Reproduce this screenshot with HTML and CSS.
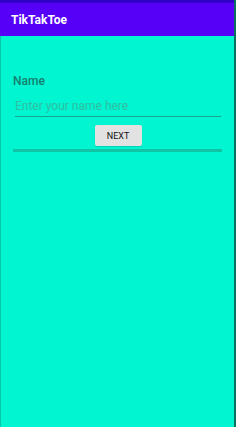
FILE: index.html
```html
<!DOCTYPE html>
<html lang="en">

<head>
    <meta charset="UTF-8">
    <meta name="viewport" content="width=device-width, initial-scale=1.0">
    <title>TikTakToe</title>
    <link rel="stylesheet" href="styles.css">
</head>

<body>
    <div class="app">
        <div class="statusbar"></div>
        <div class="toolbar">TikTakToe</div>
        <div class="content">
            <div class="form">
                <div class="label">Name</div>
                <input class="nameinput" type="text" placeholder="Enter your name here">
                <div class="btnrow">
                    <button class="nextbtn">NEXT</button>
                </div>
                <div class="divider"></div>
            </div>
        </div>
    </div>
</body>

</html>
```

FILE: styles.css
```css
body {
    margin: 0;
    font-family: Roboto, "Noto Sans", sans-serif;
}

.app {
    width: 236px;
    height: 427px;
    display: flex;
    flex-direction: column;
    background-color: #01f5d0;
    border-right: 2px solid #0b6f60;
    box-sizing: border-box;
}

.statusbar {
    height: 3px;
    background-color: #3100c8;
}

.toolbar {
    height: 33px;
    background-color: #5600f8;
    color: #ffffff;
    font-size: 12px;
    font-weight: bold;
    display: flex;
    align-items: center;
    padding-left: 11px;
}

.content {
    flex: 1;
    border-left: 1px solid #08c9a8;
}

.form {
    padding: 38px 11px 0 12px;
}

.label {
    font-size: 12px;
    font-weight: 500;
    color: #16806e;
    height: 16px;
}

.nameinput {
    display: block;
    width: 206px;
    height: 19px;
    margin: 6px 0 0 2px;
    padding: 0 0 1px 0;
    border: none;
    border-bottom: 1px solid #15a58d;
    background: none;
    font-family: Roboto, "Noto Sans", sans-serif;
    font-size: 12px;
    outline: none;
    box-sizing: content-box;
}

.nameinput::placeholder {
    color: #2fbfa3;
}

.btnrow {
    display: flex;
    justify-content: center;
    margin-top: 8px;
}

.nextbtn {
    width: 47px;
    height: 21px;
    border: none;
    border-radius: 2px;
    background-color: #e2e2e2;
    color: #111111;
    font-family: Roboto, "Noto Sans", sans-serif;
    font-size: 9px;
    padding: 0;
    box-shadow: 0 1px 1px rgba(0, 0, 0, 0.15);
}

.divider {
    height: 3px;
    margin-top: 3px;
    margin-right: 1px;
    background-color: #10c4a6;
}
```
